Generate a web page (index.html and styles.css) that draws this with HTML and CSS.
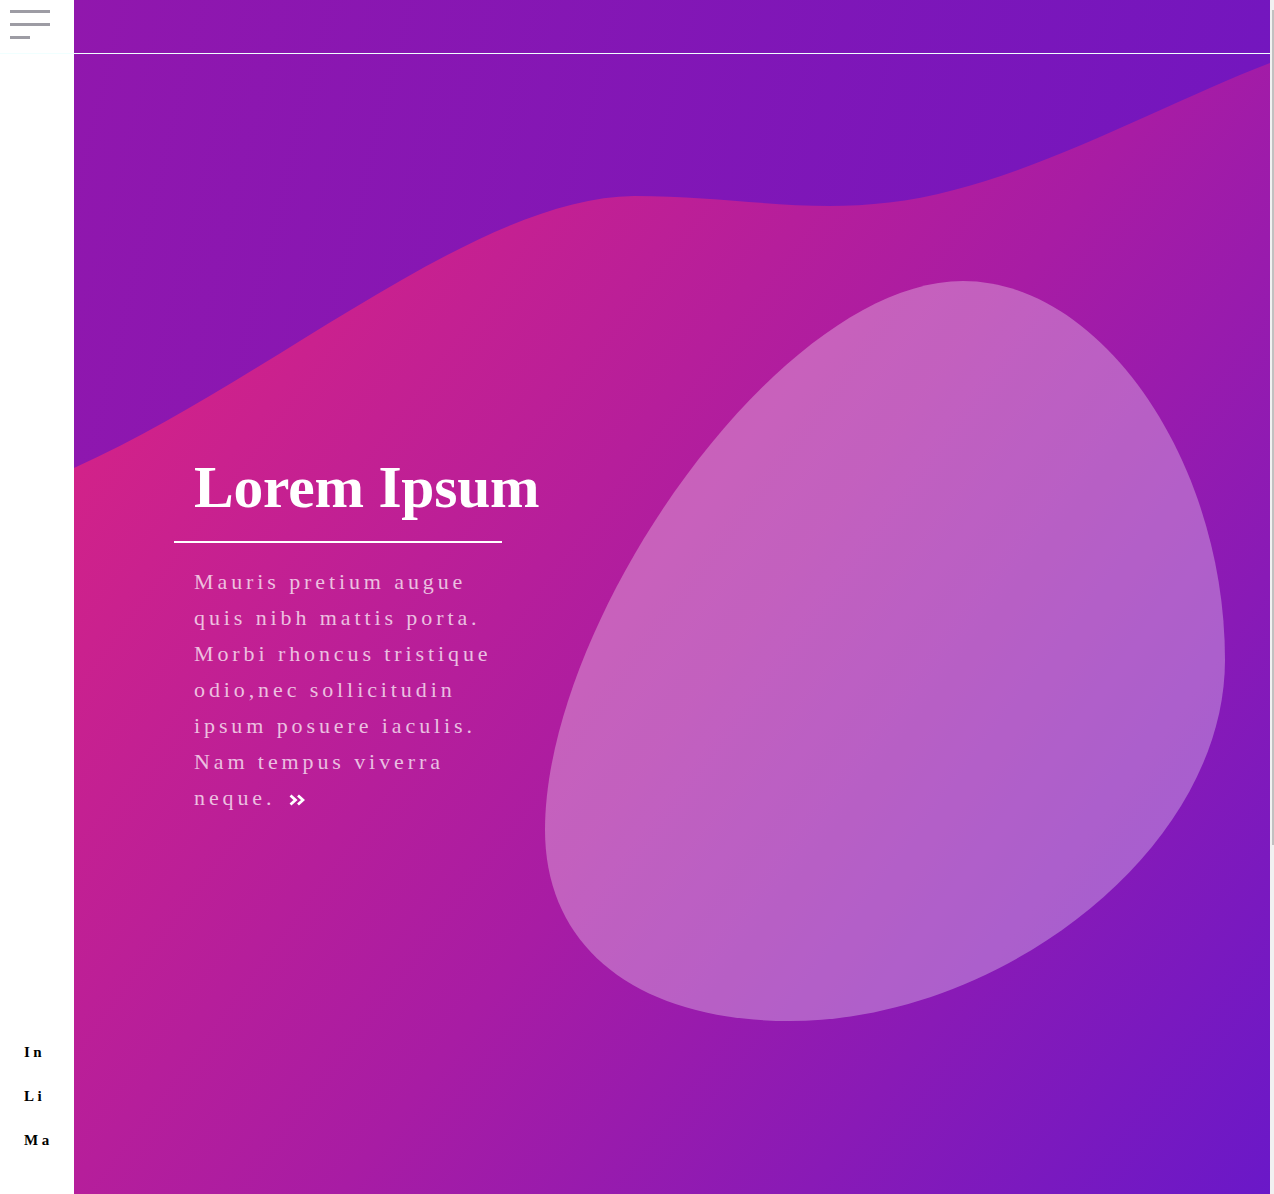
FILE: index.html
```html
<!DOCTYPE html>
<html lang="en">
<head>
<meta charset="utf-8">
<title>Lorem Ipsum</title>
<link rel="stylesheet" href="styles.css">
</head>
<body>
<div class="page">
  <header class="topbar">
    <button class="burger" aria-label="Menu">
      <span class="bar"></span>
      <span class="bar"></span>
      <span class="bar bar-short"></span>
    </button>
  </header>
  <div class="layout">
    <aside class="sidebar">
      <nav class="social">
        <a class="social-link" href="#">In</a>
        <a class="social-link" href="#">Li</a>
        <a class="social-link" href="#">Ma</a>
      </nav>
    </aside>
    <main class="hero">
      <svg class="hero-bg" viewBox="0 0 1196 1194" preserveAspectRatio="none" aria-hidden="true">
        <defs>
          <linearGradient id="base" x1="0" y1="0" x2="1196" y2="300" gradientUnits="userSpaceOnUse">
            <stop offset="0" stop-color="#9117ad"/>
            <stop offset="1" stop-color="#7216bf"/>
          </linearGradient>
          <linearGradient id="wave" x1="0" y1="300" x2="1196" y2="1194" gradientUnits="userSpaceOnUse">
            <stop offset="0" stop-color="#d82385"/>
            <stop offset="0.5" stop-color="#a81ca4"/>
            <stop offset="1" stop-color="#6a18c8"/>
          </linearGradient>
        </defs>
        <rect width="1196" height="1194" fill="url(#base)"/>
        <path d="M0,468 C200,378 400,198 560,196 C680,196 760,222 880,190 C980,165 1100,100 1196,63 L1196,1194 L0,1194 Z" fill="url(#wave)"/>
        <path d="M889,281 C1026,281 1151,460 1151,660 C1151,850 926,1021 716,1021 C566,1021 471,950 471,830 C471,620 706,281 889,281 Z" fill="#ffffff" fill-opacity="0.3"/>
      </svg>
      <section class="intro">
        <div class="title-wrap">
          <h1 class="title">Lorem Ipsum</h1>
        </div>
        <p class="lead">Mauris pretium augue quis nibh mattis porta. Morbi rhoncus tristique odio,nec sollicitudin ipsum posuere iaculis. Nam tempus viverra neque.<svg class="more" viewBox="0 0 16 12" aria-hidden="true"><path d="M1.5,1.5 L6.5,6 L1.5,10.5 M9,1.5 L14,6 L9,10.5" fill="none" stroke="#ffffff" stroke-width="2.8" stroke-linecap="butt" stroke-linejoin="miter"/></svg></p>
      </section>
    </main>
  </div>
</div>
<div class="scrollbar"><div class="thumb"></div></div>
</body>
</html>
```
FILE: styles.css
```css
html, body {
  margin: 0;
  padding: 0;
  height: 100%;
}
body {
  display: flex;
  height: 1194px;
  overflow: hidden;
  background: #ffffff;
  font-family: "Liberation Serif", "Times New Roman", serif;
}
.page {
  flex: 1;
  position: relative;
  min-width: 0;
}
.topbar {
  position: absolute;
  top: 0;
  left: 0;
  right: 0;
  height: 53px;
  border-bottom: 1px solid #f0ffff;
  z-index: 5;
}
.burger {
  display: flex;
  flex-direction: column;
  gap: 10px;
  padding: 10px;
  margin: 0;
  border: 0;
  background: transparent;
  cursor: pointer;
}
.bar {
  display: block;
  width: 40px;
  height: 3px;
  background: #9d9ca4;
}
.bar-short {
  width: 20px;
}
.layout {
  display: flex;
  height: 1194px;
}
.sidebar {
  width: 74px;
  flex-shrink: 0;
  background: #ffffff;
  display: flex;
  flex-direction: column;
  justify-content: flex-end;
}
.social {
  display: flex;
  flex-direction: column;
  gap: 26px;
  padding: 0 0 45px 24px;
}
.social-link {
  font-family: "Liberation Serif", "Times New Roman", serif;
  font-weight: bold;
  font-size: 15px;
  line-height: 18px;
  letter-spacing: 3.5px;
  color: #000000;
  text-decoration: none;
}
.hero {
  flex: 1;
  position: relative;
  overflow: hidden;
}
.hero-bg {
  position: absolute;
  inset: 0;
  width: 100%;
  height: 100%;
  display: block;
}
.intro {
  position: relative;
  padding: 452px 0 0 100px;
  width: 328px;
}
.title-wrap {
  border-bottom: 2px solid #ffffff;
  padding: 0 0 18px 20px;
}
.title {
  margin: 0;
  font-family: "Liberation Serif", "Times New Roman", serif;
  font-weight: bold;
  font-size: 59.5px;
  line-height: 71px;
  letter-spacing: -0.2px;
  color: #ffffff;
  white-space: nowrap;
}
.lead {
  margin: 21px 0 0 0;
  padding-left: 20px;
  font-size: 22px;
  line-height: 36px;
  letter-spacing: 3.9px;
  color: rgba(255, 255, 255, 0.72);
}
.more {
  width: 16px;
  height: 12px;
  margin-left: 14px;
  vertical-align: -1px;
}
.scrollbar {
  width: 4px;
  flex-shrink: 0;
  background: #f1f1f1;
  padding-top: 10px;
  box-sizing: border-box;
}
.thumb {
  margin-left: 2px;
  width: 2px;
  height: 835px;
  background: #c1c1c1;
}
```
